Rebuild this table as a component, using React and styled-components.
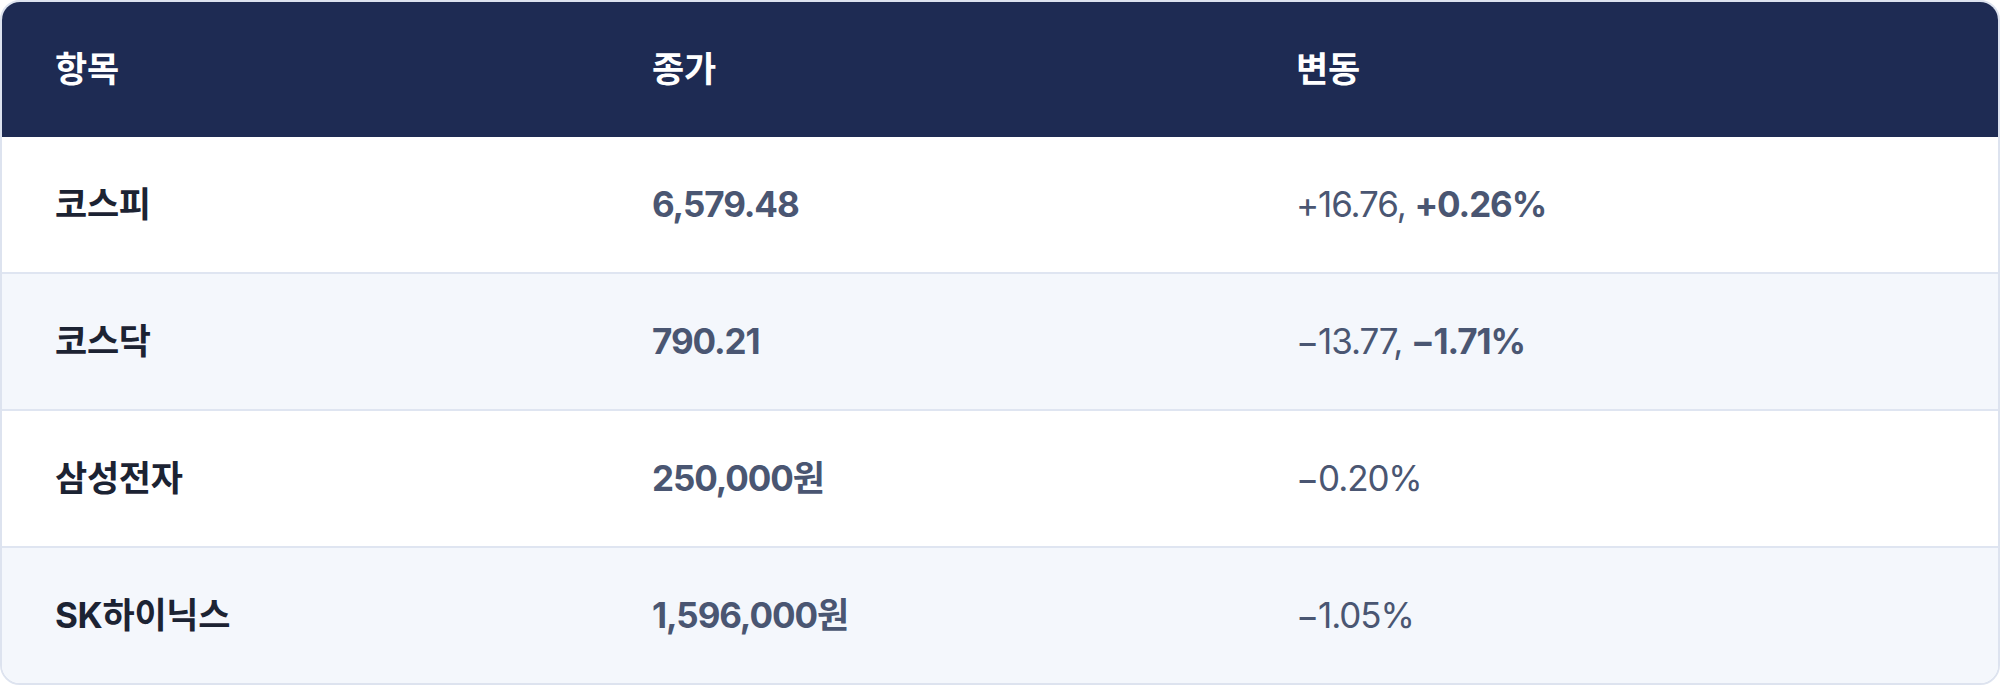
import React from 'react';
import styled, { createGlobalStyle } from 'styled-components';

const GlobalStyle = createGlobalStyle`
  html, body {
    margin: 0;
    padding: 0;
    background: #ffffff;
  }
  body {
    font-family: Inter, "Noto Sans CJK KR", "Noto Sans", sans-serif;
  }
`;

const Card = styled.div`
  border: 2px solid #dde3ef;
  border-radius: 20px;
  overflow: hidden;
  background: #ffffff;
`;

const Row = styled.div`
  display: grid;
  grid-template-columns: 597px 644px 1fr;
  align-items: center;
  height: 135px;
  background: ${(p) => (p.$head ? '#1e2b53' : p.$alt ? '#f4f7fc' : '#ffffff')};
  border-bottom: ${(p) => (p.$last || p.$head ? 'none' : '2px solid #dfe5f1')};
`;

const Cell = styled.div`
  padding-left: 53px;
  font-size: 35px;
  line-height: 1;
  letter-spacing: ${(p) => (p.$tight ? '-1.1px' : '-0.3px')};
  font-weight: ${(p) => (p.$bold ? 700 : 400)};
  color: ${(p) => p.$color || '#4a5672'};
  white-space: nowrap;
`;

const Strong = styled.span`
  font-weight: 700;
`;

const rows = [
  { name: '코스피', close: '6,579.48', diff: '+16.76, ', pct: '+0.26%' },
  { name: '코스닥', close: '790.21', diff: '\u221213.77, ', pct: '\u22121.71%' },
  { name: '삼성전자', close: '250,000원', diff: '\u22120.20%' },
  { name: 'SK하이닉스', close: '1,596,000원', diff: '\u22121.05%' },
];

export default function App() {
  return (
    <>
      <GlobalStyle />
      <Card>
        <Row $head>
          <Cell $bold $color="#ffffff">항목</Cell>
          <Cell $bold $color="#ffffff">종가</Cell>
          <Cell $bold $color="#ffffff">변동</Cell>
        </Row>
        {rows.map((r, i) => (
          <Row key={r.name} $alt={i % 2 === 1} $last={i === rows.length - 1}>
            <Cell $bold $color="#1c2333">{r.name}</Cell>
            <Cell $bold $tight>{r.close}</Cell>
            <Cell $tight>
              {r.diff}
              {r.pct && <Strong>{r.pct}</Strong>}
            </Cell>
          </Row>
        ))}
      </Card>
    </>
  );
}
